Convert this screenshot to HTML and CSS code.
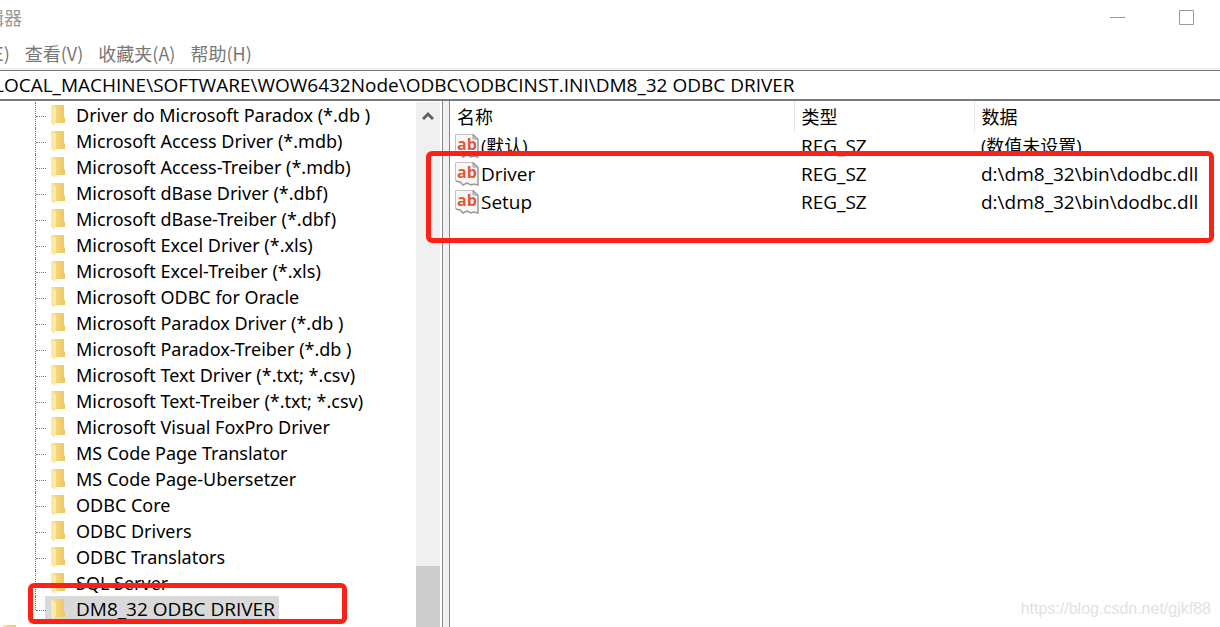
FILE: index.html
```html
<!DOCTYPE html>
<html lang="zh-CN">
<head>
    <meta charset="UTF-8">
    <title>注册表编辑器</title>
    <link rel="stylesheet" href="styles.css">
</head>
<body>
    <svg class="defs" aria-hidden="true">
        <defs>
            <linearGradient id="gold" x1="0" x2="1">
                <stop offset="0" stop-color="#fbe08f"/>
                <stop offset="1" stop-color="#edc55f"/>
            </linearGradient>
        </defs>
        <symbol id="folder" viewBox="0 0 14 22">
            <path d="M0 0h13v12l1 1v5H3z" fill="url(#gold)"/>
            <path d="M0 0l5 3v13l-1 2v3l-4-3z" fill="#ffe8a2"/>
        </symbol>
        <symbol id="string" viewBox="0 0 24 24">
            <path d="M1 1h17l5 5v17l-4-1-3 1-4-2-4 2-3-3-4-1z" fill="#f6f6f6"/>
            <path d="M.5 19V.5H18" fill="none" stroke="#c4c4c4"/>
            <path d="M18 0v5h5" fill="#ddd" stroke="#999"/>
            <path d="M18 .5l5 5v17.500l-4-1-3 1-4-2-4 2-3-3-4-1" fill="none" stroke="#999" stroke-width="1.500"/>
        </symbol>
    </svg>

    <header class="titlebar">
        <h1>辑器</h1>
        <div class="window-buttons">
            <button aria-label="最小化"><svg width="15" height="15"><path d="M0 7.500h15" stroke="#999"/></svg></button>
            <button aria-label="最大化"><svg width="15" height="15"><path d="M.5.5h14v14H.5z" fill="none" stroke="#999"/></svg></button>
        </div>
    </header>

    <nav class="menubar">
        <button>(E)</button>
        <button>查看(V)</button>
        <button>收藏夹(A)</button>
        <button>帮助(H)</button>
    </nav>

    <input class="address" type="text" aria-label="地址" value="LOCAL_MACHINE\SOFTWARE\WOW6432Node\ODBC\ODBCINST.INI\DM8_32 ODBC DRIVER">

    <main class="panes">
        <section class="tree-pane">
            <ul class="tree">
                <li><div class="key"><svg class="folder"><use href="#folder"/></svg>Driver do Microsoft Paradox (*.db )</div></li>
                <li><div class="key"><svg class="folder"><use href="#folder"/></svg>Microsoft Access Driver (*.mdb)</div></li>
                <li><div class="key"><svg class="folder"><use href="#folder"/></svg>Microsoft Access-Treiber (*.mdb)</div></li>
                <li><div class="key"><svg class="folder"><use href="#folder"/></svg>Microsoft dBase Driver (*.dbf)</div></li>
                <li><div class="key"><svg class="folder"><use href="#folder"/></svg>Microsoft dBase-Treiber (*.dbf)</div></li>
                <li><div class="key"><svg class="folder"><use href="#folder"/></svg>Microsoft Excel Driver (*.xls)</div></li>
                <li><div class="key"><svg class="folder"><use href="#folder"/></svg>Microsoft Excel-Treiber (*.xls)</div></li>
                <li><div class="key"><svg class="folder"><use href="#folder"/></svg>Microsoft ODBC for Oracle</div></li>
                <li><div class="key"><svg class="folder"><use href="#folder"/></svg>Microsoft Paradox Driver (*.db )</div></li>
                <li><div class="key"><svg class="folder"><use href="#folder"/></svg>Microsoft Paradox-Treiber (*.db )</div></li>
                <li><div class="key"><svg class="folder"><use href="#folder"/></svg>Microsoft Text Driver (*.txt; *.csv)</div></li>
                <li><div class="key"><svg class="folder"><use href="#folder"/></svg>Microsoft Text-Treiber (*.txt; *.csv)</div></li>
                <li><div class="key"><svg class="folder"><use href="#folder"/></svg>Microsoft Visual FoxPro Driver</div></li>
                <li><div class="key"><svg class="folder"><use href="#folder"/></svg>MS Code Page Translator</div></li>
                <li><div class="key"><svg class="folder"><use href="#folder"/></svg>MS Code Page-Ubersetzer</div></li>
                <li><div class="key"><svg class="folder"><use href="#folder"/></svg>ODBC Core</div></li>
                <li><div class="key"><svg class="folder"><use href="#folder"/></svg>ODBC Drivers</div></li>
                <li><div class="key"><svg class="folder"><use href="#folder"/></svg>ODBC Translators</div></li>
                <li><div class="key"><svg class="folder"><use href="#folder"/></svg>SQL Server</div></li>
                <li class="selected"><div class="key"><svg class="folder"><use href="#folder"/></svg>DM8_32 ODBC DRIVER</div><i class="mark mark-key"></i></li>
                <li class="next-parent"><svg class="folder"><use href="#folder"/></svg></li>
            </ul>
            <div class="scrollbar">
                <button aria-label="向上滚动"><svg width="12" height="10"><path d="M1 8l5-5 5 5" fill="none" stroke="#606060" stroke-width="3"/></svg></button>
                <div class="thumb"></div>
            </div>
        </section>

        <section class="value-pane">
            <table>
                <thead>
                    <tr><th class="name">名称</th><th class="type">类型</th><th>数据</th></tr>
                </thead>
                <tbody>
                    <tr>
                        <td><div class="value"><svg class="string"><use href="#string"/><text x="2" y="16">ab</text></svg><span class="cjk">(默认)</span></div></td>
                        <td>REG_SZ</td>
                        <td><span class="cjk">(数值未设置)</span></td>
                    </tr>
                    <tr>
                        <td><div class="value"><svg class="string"><use href="#string"/><text x="2" y="16">ab</text></svg>Driver</div></td>
                        <td>REG_SZ</td>
                        <td>d:\dm8_32\bin\dodbc.dll</td>
                    </tr>
                    <tr>
                        <td><div class="value"><svg class="string"><use href="#string"/><text x="2" y="16">ab</text></svg>Setup</div></td>
                        <td>REG_SZ</td>
                        <td>d:\dm8_32\bin\dodbc.dll</td>
                    </tr>
                </tbody>
            </table>
            <i class="mark mark-values"></i>
            <p class="watermark">https://blog.csdn.net/gjkf88</p>
        </section>
    </main>
</body>
</html>
```

FILE: styles.css
```css
* {
    box-sizing: border-box;
}

body {
    margin: 0;
    height: 100vh;
    display: flex;
    flex-direction: column;
    overflow: hidden;
    background: #fff;
    color: #000;
    font: 19px/26px "Open Sans", "Noto Sans CJK SC", sans-serif;
}

button {
    padding: 0;
    border: 0;
    background: none;
    color: inherit;
    font: inherit;
}

svg {
    display: block;
}

.defs {
    position: absolute;
    width: 0;
    height: 0;
}

.titlebar {
    display: flex;
    justify-content: space-between;
    height: 38px;
    color: #999;
}

.titlebar h1 {
    margin: 5px 0 0 -14px;
    font-size: 18px;
    font-weight: normal;
}

.window-buttons {
    display: flex;
    gap: 54px;
    padding: 10px 26px 0 0;
}

.window-buttons button {
    height: 15px;
}

.menubar {
    display: flex;
    gap: 15px;
    height: 32px;
    padding-bottom: 2px;
    margin-left: -13px;
    color: #777;
    font-family: "Noto Sans CJK SC", sans-serif;
    font-size: 18px;
}

.address {
    flex: none;
    width: 100%;
    height: 31px;
    padding: 0;
    border: solid #777b80;
    border-width: 1px 0 2px;
    box-shadow: 0 -2px #f0f0f0;
    outline: 0;
    text-indent: -6px;
    color: #000;
    background: #fff;
    font: inherit;
}

.panes {
    flex: 1;
    display: flex;
    min-height: 0;
}

.tree-pane {
    flex: none;
    display: flex;
    width: 443px;
    padding: 1px 2px 0 0;
    border-right: 1px solid #828790;
}

.tree {
    flex: 1;
    margin: 0;
    padding: 0 0 0 35px;
    list-style: none;
    white-space: nowrap;
    font-family: "Noto Sans", sans-serif;
    font-size: 18px;
}

.tree li {
    position: relative;
    display: flex;
    height: 26px;
    padding-left: 9px;
    border-left: 1px dotted #777;
}

.tree li::before {
    content: "";
    position: absolute;
    top: 14px;
    left: 0;
    width: 10px;
    border-top: 1px dotted #777;
}

.key {
    display: flex;
    gap: 11px;
    padding: 0 4px 0 6px;
}

.folder {
    flex: none;
    width: 14px;
    height: 22px;
    margin-top: 3px;
}

.tree .selected {
    border-color: transparent;
    font-family: "Open Sans", sans-serif;
    font-size: 19px;
}

.selected::after {
    content: "";
    position: absolute;
    top: 0;
    left: -1px;
    height: 14px;
    border-left: 1px dotted #777;
}

.selected .key {
    background: #d9d9d9;
}

.tree .next-parent {
    margin-left: -35px;
    padding: 0;
    border: 0;
}

.next-parent::before {
    display: none;
}

.next-parent .folder {
    margin-left: 3px;
}

.scrollbar {
    display: flex;
    flex-direction: column;
    justify-content: space-between;
    width: 24px;
    background: #f0f0f0;
}

.scrollbar button {
    display: grid;
    place-items: center;
    height: 28px;
}

.thumb {
    height: 61px;
    background: #cdcdcd;
}

.value-pane {
    flex: 1;
    position: relative;
    margin-left: 6px;
    border-left: 1px solid #828790;
    box-shadow: -6px 0 #f0f0f0;
}

table {
    width: 100%;
    table-layout: fixed;
    border-collapse: collapse;
    white-space: nowrap;
}

th,
td {
    padding: 0 0 0 7px;
    text-align: left;
    font-weight: normal;
}

th {
    height: 31px;
    font-size: 18px;
}

td {
    height: 28px;
}

.name {
    width: 344px;
}

.type {
    width: 180px;
}

.name,
.type {
    border-right: 1px solid #e5e5e5;
}

.value {
    display: flex;
    gap: 2px;
    margin-left: -2px;
}

.cjk {
    font-size: 18px;
}

.string {
    flex: none;
    width: 24px;
    height: 24px;
    margin-top: 1px;
    font: bold 16px "Open Sans", sans-serif;
    fill: #dc5a38;
}

.mark {
    position: absolute;
    border: 5px solid #ff2015;
    border-radius: 6px;
    pointer-events: none;
}

.mark-key {
    z-index: 1;
    top: -13px;
    left: -8px;
    width: 319px;
    height: 41px;
}

.mark-values {
    top: 50px;
    right: 6px;
    left: -24px;
    height: 92px;
}

.watermark {
    position: absolute;
    right: 9px;
    bottom: 6px;
    margin: 0;
    color: #e2e2e2;
    font: 16px/24px "Liberation Sans", sans-serif;
}
```
